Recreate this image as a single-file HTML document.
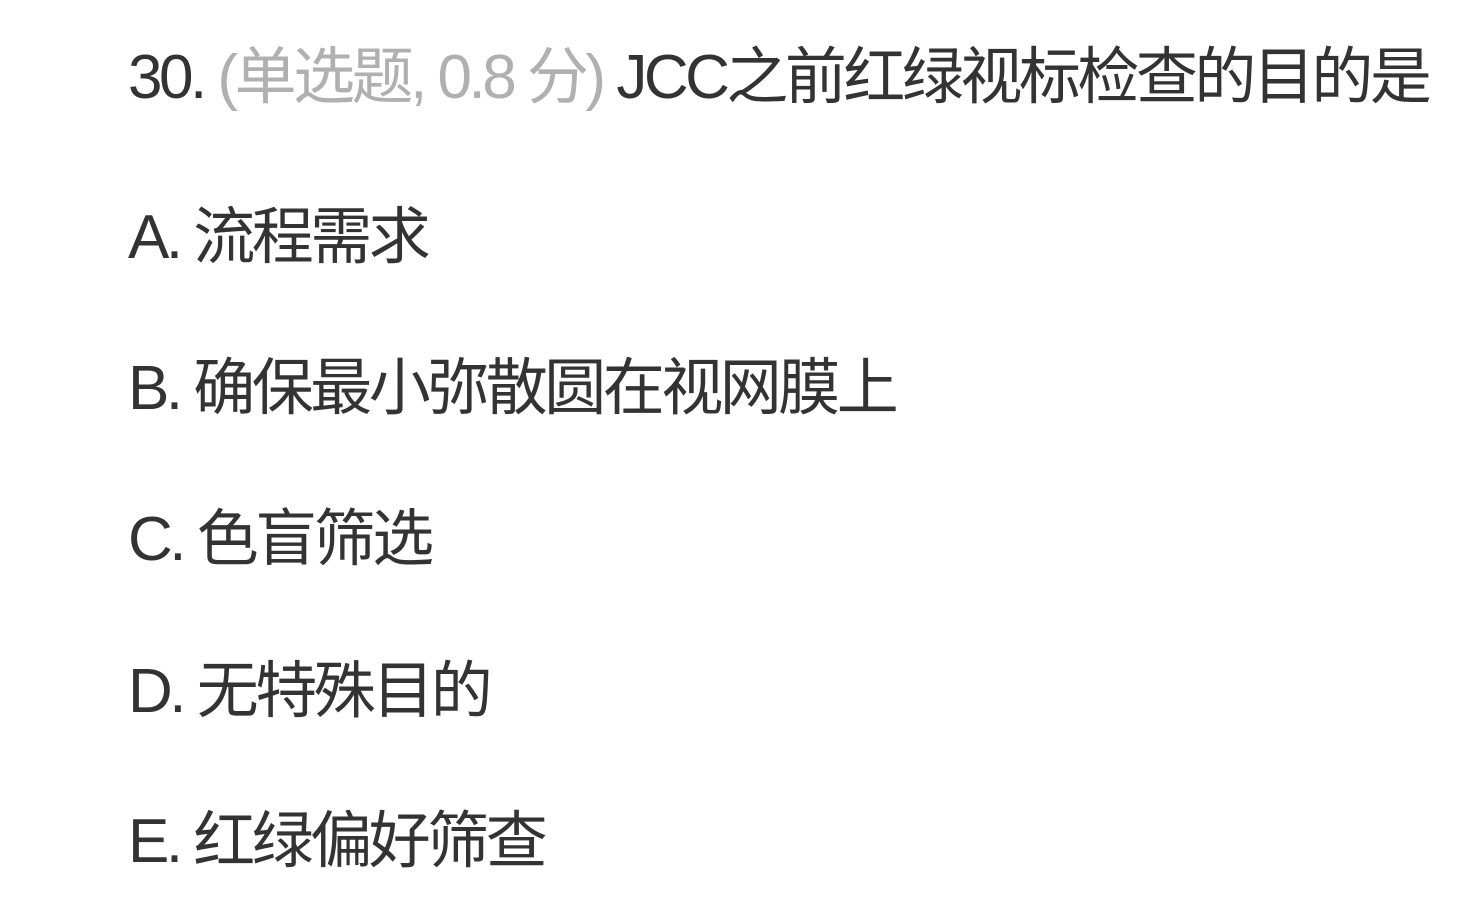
<!DOCTYPE html>
<html><head><meta charset="utf-8"><style>
html,body{margin:0;padding:0;background:#fff;width:1469px;height:923px;overflow:hidden}
.l{position:absolute;left:128px;font-family:"Liberation Sans","Noto Sans CJK SC",sans-serif;font-size:62px;color:#333;white-space:nowrap;line-height:1;letter-spacing:-3.5px}
.g{color:#b0b0b0}
</style></head><body>
<div class="l" style="top:47px">30. <span class="g">(单选题, 0.8 分)</span> JCC之前红绿视标检查的目的是</div>
<div class="l" style="top:207px">A. 流程需求</div>
<div class="l" style="top:358px">B. 确保最小弥散圆在视网膜上</div>
<div class="l" style="top:509px">C. 色盲筛选</div>
<div class="l" style="top:661px">D. 无特殊目的</div>
<div class="l" style="top:811px">E. 红绿偏好筛查</div>
</body></html>
